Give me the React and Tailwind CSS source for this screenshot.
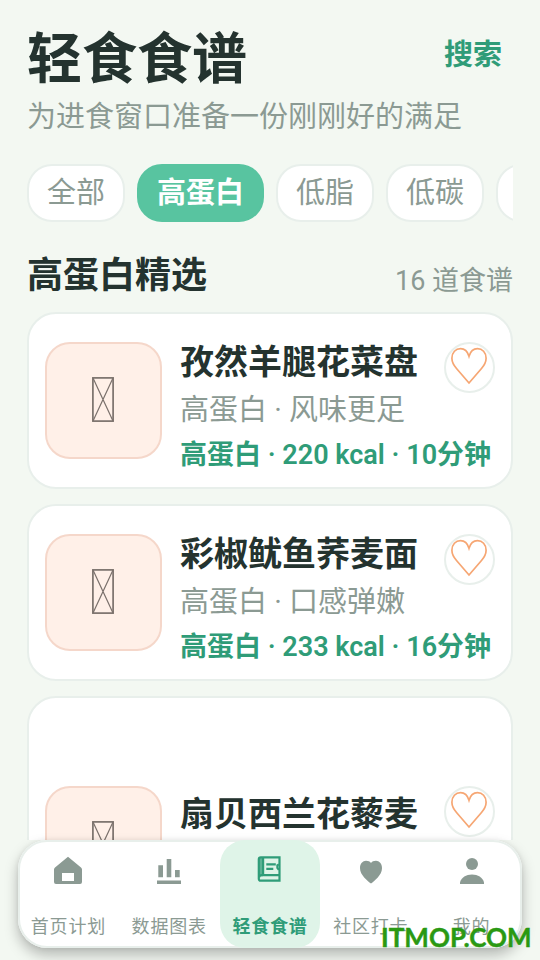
const chips = ["全部", "高蛋白", "低脂", "低碳", "素食"];

const recipes = [
  { title: "孜然羊腿花菜盘", sub: "高蛋白 · 风味更足", meta: "高蛋白 · 220 kcal · 10分钟" },
  { title: "彩椒鱿鱼荞麦面", sub: "高蛋白 · 口感弹嫩", meta: "高蛋白 · 233 kcal · 16分钟" },
  { title: "扇贝西兰花藜麦", tall: true },
];

function Thumb() {
  return (
    <div className="flex h-[117px] w-[117px] shrink-0 items-center justify-center rounded-[25px] border-2 border-[#f5d7ca] bg-[#fff0e8]">
      <svg className="mt-[-2px] mr-px h-[45px] w-[22px]" viewBox="0 0 22 45" fill="none" stroke="#7b716c">
        <rect x="0.9" y="0.9" width="20.2" height="43.2" strokeWidth="1.7" />
        <path d="M1 1L21 44M21 1L1 44" strokeWidth="1.2" />
      </svg>
    </div>
  );
}

function Favorite() {
  return (
    <div className="flex h-[51px] w-[51px] shrink-0 justify-center rounded-full border-2 border-[#e8efeb] bg-white pt-[3px] pr-px">
      <svg className="h-[38px] w-[38px]" viewBox="0 0 38 38" fill="none" stroke="#f6a673" strokeWidth="1.7">
        <path d="M19 36L6.5 21.5C3.5 18 1.9 14.8 1.9 11.2C1.9 5.5 5.7 1.6 10.5 1.6C14.8 1.6 17.6 4.5 19 9.2C20.4 4.5 23.2 1.6 27.5 1.6C32.3 1.6 36.1 5.5 36.1 11.2C36.1 14.8 34.5 18 31.5 21.5Z" />
      </svg>
    </div>
  );
}

function RecipeCard({ recipe }) {
  return (
    <article
      className={`flex shrink-0 rounded-[29px] border-2 border-[#e8efeb] bg-white px-4 ${
        recipe.tall ? "h-[297px] pt-[88px]" : "h-[177px] pt-7"
      }`}
    >
      <Thumb />
      <div className="ml-[18px] min-w-0 flex-1 whitespace-nowrap">
        <div className={`flex justify-between ${recipe.tall ? "h-[51px]" : "h-[47px]"}`}>
          <h3 className={`text-[34px] leading-[38px] font-bold text-[#24332f] ${recipe.tall ? "mt-[9px]" : "mt-px"}`}>
            {recipe.title}
          </h3>
          <Favorite />
        </div>
        <p className="h-[45px] text-[29px] leading-[42px] text-[#8b9a93]">{recipe.sub}</p>
        <p className="text-[27px] leading-[42px] font-semibold text-[#2f9c78]">{recipe.meta}</p>
      </div>
    </article>
  );
}

const tabs = [
  {
    label: "首页计划",
    icon: (
      <path
        fillRule="evenodd"
        d="M16 2.7L29 13.5Q30 14.3 30 15.5V28Q30 30 28 30H4Q2 30 2 28V15.5Q2 14.3 3 13.5ZM10 19V27H22V19Z"
      />
    ),
  },
  {
    label: "数据图表",
    icon: <path d="M5.3 11.3h4.7v12H5.3zM13.7 5h4.6v18.3h-4.6zM22 16h4.7v7.3H22zM4 26.5h24V30H4z" />,
  },
  {
    label: "轻食食谱",
    active: true,
    icon: (
      <g transform="translate(-0.7 -0.7)">
        <path d="M5.5 4H9.5V23H5.5z" opacity=".75" />
        <path
          d="M7.5 4H26.2V27.4H7.5Q5.5 27.4 5.5 25.4V6Q5.5 4 7.5 4ZM9.8 4V21.7M5.8 24Q6 21.9 8.5 21.9H26M13 11H22.5M13 15.5H20"
          fill="none"
          stroke="currentColor"
          strokeWidth="2.2"
        />
        <path d="M25.5 11L24 12V14.5L25.5 16.5" fill="none" stroke="currentColor" strokeWidth="2" />
      </g>
    ),
  },
  {
    label: "社区打卡",
    icon: (
      <path d="M16 29.5C12.5 26.8 5 21 5 14.2C5 9.7 7.8 6.8 11 6.8C13.3 6.8 15 7.5 16 9C17 7.5 18.7 6.8 21 6.8C24.2 6.8 27 9.7 27 14.2C27 21 19.5 26.8 16 29.5Z" />
    ),
  },
  {
    label: "我的",
    icon: (
      <>
        <circle cx="16" cy="10" r="6" />
        <path d="M4 30V28.2C5.5 23.5 10 20.5 16 20.5S26.5 23.5 28 28.2V30Z" />
      </>
    ),
  },
];

export default function App() {
  return (
    <div className="relative flex h-[960px] w-[540px] flex-col overflow-hidden bg-[#f3f8f2] font-[Roboto,'Noto_Sans_CJK_SC',sans-serif]">
      <main className="flex h-[840px] shrink-0 flex-col overflow-hidden px-[27px]">
        <header className="flex h-[94px] shrink-0 items-start justify-between">
          <h1 className="mt-[23px] text-[55px] leading-[72px] font-bold text-[#24332f]">轻食食谱</h1>
          <button className="mt-[34px] mr-[11px] text-[29px] leading-[42px] font-bold text-[#2f9c78]">搜索</button>
        </header>
        <p className="h-[70px] shrink-0 pt-0.5 text-[29px] leading-[42px] whitespace-nowrap text-[#8b9a93]">
          为进食窗口准备一份刚刚好的满足
        </p>
        <div className="flex h-[58px] shrink-0 gap-3 overflow-hidden">
          {chips.map((chip, i) => (
            <span
              key={chip}
              className={`shrink-0 rounded-[25px] border-2 px-[18px] text-[29px] leading-[54px] ${
                i === 1
                  ? "border-[#58c4a0] bg-[#58c4a0] font-bold text-white"
                  : "border-[#e8efeb] bg-white text-[#8b9a93]"
              }`}
            >
              {chip}
            </span>
          ))}
        </div>
        <div className="flex h-[90px] shrink-0 justify-between">
          <h2 className="mt-[28px] text-[36px] leading-[52px] font-bold text-[#24332f]">高蛋白精选</h2>
          <span className="mt-[39px] text-[27px] leading-[40px] text-[#8b9a93]">16 道食谱</span>
        </div>
        <section className="flex flex-col gap-[15px]">
          {recipes.map((recipe) => (
            <RecipeCard key={recipe.title} recipe={recipe} />
          ))}
        </section>
      </main>

      <nav className="mx-[18px] flex h-[108px] shrink-0 rounded-[29px] bg-white shadow-[0_7px_14px_rgba(0,0,0,0.26),0_0_5px_rgba(0,0,0,0.07)] inset-ring-2 inset-ring-[#e8efeb]">
        {tabs.map((tab) => (
          <div
            key={tab.label}
            className={`flex flex-1 flex-col items-center rounded-[25px] pt-[14px] ${
              tab.active ? "bg-[#dff4e8] font-bold text-[#2f9c78]" : "text-[#8b9a93]"
            }`}
          >
            <svg className="h-8 w-8" viewBox="0 0 32 32" fill="currentColor">
              {tab.icon}
            </svg>
            <span className="mt-[27px] text-[18px] leading-7 tracking-[0.8px] whitespace-nowrap">{tab.label}</span>
          </div>
        ))}
      </nav>

      <div className="absolute top-[919px] left-[381px] font-[Lato,sans-serif] text-[26px] leading-9 font-bold whitespace-nowrap text-[#2a9913] [-webkit-text-stroke:0.4px_#2a9913]">
        ITMOP.COM
      </div>
    </div>
  );
}
